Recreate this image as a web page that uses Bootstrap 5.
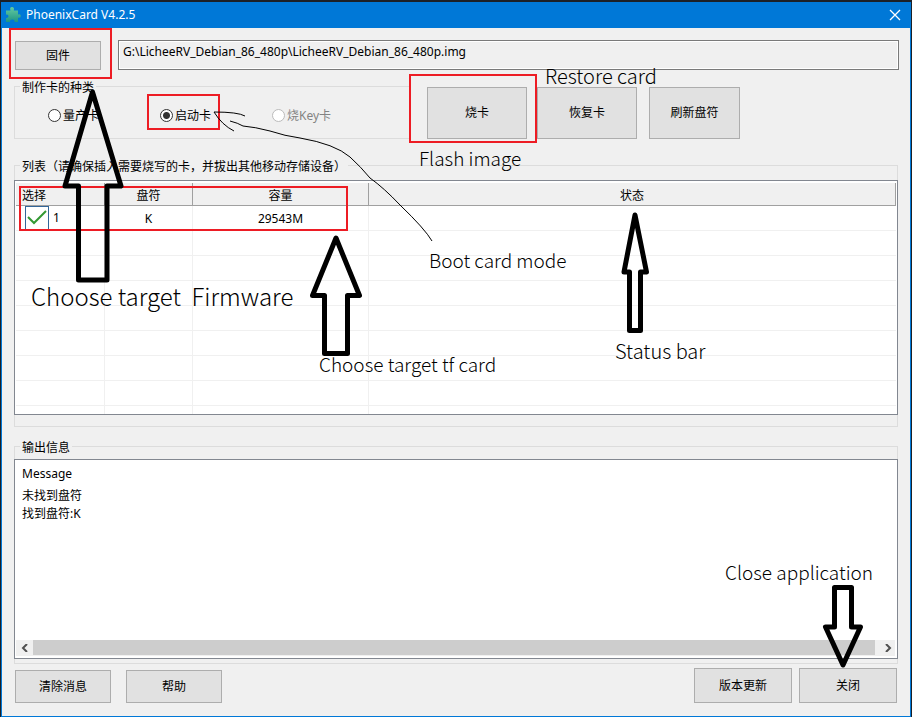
<!DOCTYPE html>
<html lang="zh-CN">
<head>
<meta charset="utf-8">
<meta name="viewport" content="width=device-width, initial-scale=1">
<title>PhoenixCard V4.2.5</title>
<link href="https://cdn.jsdelivr.net/npm/bootstrap@5.3.0/dist/css/bootstrap.min.css" rel="stylesheet">
<style>
  :root { --face: #f0f0f0; --accent: #0078d7; --edge: #828790; --line: #dcdcdc; --grid: #f0f0f0; }
  body { background: #1c2026; padding: 2px 1px 0; color: #000; font: 12px/18px "Noto Sans", "Noto Sans CJK SC", sans-serif; }
  .app-window { background: var(--face); border: 1px solid var(--accent); border-top: 0; }
  .title-bar { background: var(--accent); color: #fff; height: 26px; padding: 0 7px 0 3px; gap: 3px; }
  .title-close { width: 16px; height: 16px; color: #fff; }
  .client { padding: 12px 11px 12px 12px; }
  .win-btn { --bs-btn-font-size: 12px; --bs-btn-line-height: 18px; --bs-btn-padding-x: 0; --bs-btn-padding-y: 0;
    --bs-btn-bg: #e1e1e1; --bs-btn-border-color: #adadad; --bs-btn-color: #000; --bs-btn-border-radius: 0;
    --bs-btn-hover-bg: #e5f1fb; --bs-btn-hover-border-color: #0078d7; --bs-btn-hover-color: #000; }
  .w-firmware { width: 86px; height: 29px; margin: 1px 17px 0 1px; }
  .kind-row { margin-top: 6px; }
  .w-card { width: 100px; height: 52px; margin-right: 10px; }
  .w-refresh { width: 91px; height: 52px; margin-left: 2px; }
  .foot-row { padding: 0 2px 0 1px; gap: 7px; }
  .w-foot { width: 96px; height: 33px; }
  .w-foot-tall { width: 98px; height: 35px; }
  .path-box { height: 30px; border: 1px solid #7a7a7a; border-radius: 0; background: var(--face); color: #000;
    box-shadow: inset 0 0 0 1px #fff; padding: 0 4px 8px; font-size: 12px; line-height: 18px; }
  .group { border: 1px solid var(--line); min-width: 0; margin-right: 1px; }
  .group > legend { float: none; width: auto; margin: 0 0 4px 5px; padding: 3px 2px 0; font-size: 12px; line-height: 18px; }
  .kinds { flex: 0 1 396px; height: 63px; margin-right: 17px; }
  .kind-list { padding: 4px 0 0 33px; }
  .kinds .form-check { width: 112px; min-height: 18px; padding: 0; margin: 0; }
  .kinds .form-check-input { float: none; margin: 0 2px 0 0; width: 13px; height: 13px; border: 1px solid #333; background-color: #fff; flex: none; }
  .kinds .form-check-input:checked { background-image: radial-gradient(circle, #333 0 3px, transparent 4px); }
  .kinds .form-check-label { color: #000; white-space: nowrap; padding-top: 2px; }
  .kinds .form-check-input:disabled, .kinds .form-check-input:disabled ~ .form-check-label { opacity: 1; color: #838383; border-color: #bbb; }
  .disk-group { padding-bottom: 11px; }
  .list-frame { background: #fff; border: 1px solid var(--edge); margin: 0 -1px; padding: 2px 1px 0 1px; }
  .disks { table-layout: fixed; width: 100%; border-collapse: separate; border-spacing: 0; text-align: center; }
  .disks th { height: 23px; padding: 3px 0 0; font-weight: 400; background: var(--face); border-bottom: 1px solid #a0a0a0; border-right: 1px solid #a0a0a0; }
  .disks th:first-child { padding-left: 6px; text-align: left; }
  .disks td { height: 25px; padding: 1px 0 0; border-bottom: 1px solid var(--grid); border-right: 1px solid var(--grid); }
  .disks td:first-child { padding: 0; }
  .disks td:last-child { border-right: 0; }
  .disks .tail td { height: 8px; border-bottom: 0; }
  .c-pick { width: 89px; } .c-drive { width: 88px; } .c-size { width: 176px; }
  .tick { appearance: none; display: block; width: 24px; height: 24px; margin: 0 4px 0 9px; border: 1px solid #336699; border-bottom: 0;
    background: #fff url("data:image/svg+xml,%3Csvg xmlns='http://www.w3.org/2000/svg' viewBox='0 0 22 22'%3E%3Cpath d='M2 9l6 6L20 3' fill='none' stroke='%23339933' stroke-width='2'/%3E%3C/svg%3E") center/22px no-repeat; }
  .output { margin-top: 9px; padding-bottom: 4px; }
  .output > legend { margin-bottom: 2px; }
  .log-frame { background: #fff; border: 1px solid var(--edge); margin: 0 -1px; padding: 5px 2px 2px 1px; min-height: 200px; }
  .log-text { padding: 0 6px; }
  .log-head { margin-bottom: 4px; }
  .scroll-x { height: 16px; background: var(--face); }
  .scroll-x button { width: 17px; height: 16px; color: #505050; }
  .scroll-x .scroll-end { width: 20px; padding-left: 5px !important; }
  .scroll-thumb { background: #cdcdcd; height: 15px; }
  .marks { width: 912px; height: 717px; pointer-events: none; }
  .note { position: absolute; font: 300 20px/28px "Noto Sans CJK SC", sans-serif; white-space: pre; }
  .note-big { font-size: 24px; line-height: 34px; }
  .note-mid { font-size: 19px; }
</style>
<script src="https://cdn.jsdelivr.net/npm/bootstrap@5.3.0/dist/js/bootstrap.bundle.min.js"></script>
</head>
<body class="position-relative min-vh-100 d-flex flex-column">
<div class="app-window flex-grow-1 d-flex flex-column">
  <header class="title-bar d-flex align-items-center">
    <svg width="18" height="18" viewBox="0 0 18 18" aria-hidden="true"><defs><linearGradient id="pz" x2="0" y2="1"><stop stop-color="#63cba0"/><stop offset="1" stop-color="#1f9484"/></linearGradient></defs><path fill="url(#pz)" d="M1 4.500H5.500Q4.300 1 7 1T8.800 4.500H13V8.500Q15.800 7.600 15.800 9.900T13 11.800V16H9.500Q10 13.500 7.300 13.500T5 16H1V12Q3.500 12.200 3.500 10.200T1 8.700Z"/></svg>
    <span>PhoenixCard V4.2.5</span>
    <button class="title-close btn p-0 border-0 ms-auto d-flex align-items-center justify-content-center" aria-label="Close"><svg width="12" height="12" viewBox="0 0 12 12"><path d="M1 1l10 10M11 1L1 11" stroke="currentColor" stroke-width="1.300"/></svg></button>
  </header>
  <main class="client flex-grow-1 d-flex flex-column">
    <div class="d-flex align-items-start">
      <button class="btn win-btn w-firmware">固件</button>
      <input class="path-box form-control w-auto flex-grow-1" type="text" aria-label="固件" readonly value="G:\LicheeRV_Debian_86_480p\LicheeRV_Debian_86_480p.img">
    </div>
    <div class="kind-row d-flex align-items-end">
      <fieldset class="group kinds">
        <legend>制作卡的种类</legend>
        <div class="kind-list d-flex">
          <div class="form-check d-flex align-items-center"><input class="form-check-input" type="radio" name="kind" id="k1"><label class="form-check-label" for="k1">量产卡</label></div>
          <div class="form-check d-flex align-items-center"><input class="form-check-input" type="radio" name="kind" id="k2" checked><label class="form-check-label" for="k2">启动卡</label></div>
          <div class="form-check d-flex align-items-center"><input class="form-check-input" type="radio" name="kind" id="k3" disabled><label class="form-check-label" for="k3">烧Key卡</label></div>
        </div>
      </fieldset>
      <button class="btn win-btn w-card">烧卡</button>
      <button class="btn win-btn w-card">恢复卡</button>
      <button class="btn win-btn w-refresh">刷新盘符</button>
    </div>
    <fieldset class="group disk-group mt-3">
      <legend>列表（请确保插入需要烧写的卡，并拔出其他移动存储设备）</legend>
      <div class="list-frame">
        <table class="disks">
          <colgroup><col class="c-pick"><col class="c-drive"><col class="c-size"><col></colgroup>
          <thead><tr><th scope="col">选择</th><th scope="col">盘符</th><th scope="col">容量</th><th scope="col">状态</th></tr></thead>
          <tbody>
            <tr><td><label class="d-flex align-items-center"><input class="tick" type="checkbox" checked>1</label></td><td>K</td><td>29543M</td><td></td></tr>
            <tr><td></td><td></td><td></td><td></td></tr>
            <tr><td></td><td></td><td></td><td></td></tr>
            <tr><td></td><td></td><td></td><td></td></tr>
            <tr><td></td><td></td><td></td><td></td></tr>
            <tr><td></td><td></td><td></td><td></td></tr>
            <tr><td></td><td></td><td></td><td></td></tr>
            <tr><td></td><td></td><td></td><td></td></tr>
            <tr class="tail"><td></td><td></td><td></td><td></td></tr>
          </tbody>
        </table>
      </div>
    </fieldset>
    <fieldset class="group output">
      <legend>输出信息</legend>
      <div class="log-frame d-flex flex-column">
        <div class="log-text flex-grow-1" role="log"><div class="log-head">Message</div><div>未找到盘符</div><div>找到盘符:K</div></div>
        <div class="scroll-x d-flex">
          <button class="btn p-0 border-0 d-flex align-items-center justify-content-center" aria-label="Scroll left"><svg width="8" height="8" viewBox="0 0 8 8"><path d="M6 0L2 4l4 4" fill="none" stroke="currentColor" stroke-width="2"/></svg></button>
          <div class="scroll-thumb flex-grow-1"></div>
          <button class="scroll-end btn p-0 border-0 d-flex align-items-center justify-content-center" aria-label="Scroll right"><svg width="8" height="8" viewBox="0 0 8 8"><path d="M2 0l4 4-4 4" fill="none" stroke="currentColor" stroke-width="2"/></svg></button>
        </div>
      </div>
    </fieldset>
    <footer class="foot-row d-flex align-items-end mt-1">
      <button class="btn win-btn w-foot me-2">清除消息</button>
      <button class="btn win-btn w-foot">帮助</button>
      <button class="btn win-btn w-foot-tall ms-auto">版本更新</button>
      <button class="btn win-btn w-foot-tall">关闭</button>
    </footer>
  </main>
</div>
<div class="marks position-absolute top-0 start-0">
  <svg class="d-block" width="912" height="717" viewBox="0 0 912 717" fill="none" aria-hidden="true">
    <g stroke="#ed1c24" stroke-width="2"><path d="M10 29H111V78H10ZM148 95H219V129H148ZM410 75H536V142H410ZM20 187H347V230H20Z"/></g>
    <g stroke="#000" stroke-width="5" stroke-linejoin="round"><path d="M92.500 92L121 186H107V280H78.500V186H65Z"/><path d="M336 238L359.500 295.500H347.500V353.500H324.500V295.500H312.500Z"/><path d="M635 215L646.500 272H640.500V330.500H629.500V272H624Z"/><path d="M834.500 587.500H851.500V627H860.500L843 665L825.500 627H834.500Z"/></g>
    <path stroke="#000" d="M245 116Q238 112 214 112Q222 125 234 131M230 121Q238 123 243 126Q255 127 270 131Q285 136 300 138Q335 144 350 157Q361 167 370 178Q384 188 400 205Q425 229 432 241"/>
  </svg>
  <span class="note note-big" style="left:31px;top:279px">Choose target  Firmware</span>
  <span class="note" style="left:545px;top:62px">Restore card</span>
  <span class="note note-mid" style="left:419px;top:144px">Flash image</span>
  <span class="note note-mid" style="left:429px;top:246px">Boot card mode</span>
  <span class="note note-mid" style="left:319px;top:350px">Choose target tf card</span>
  <span class="note" style="left:615px;top:337px">Status bar</span>
  <span class="note note-mid" style="left:725px;top:558px">Close application</span>
</div>
</body>
</html>
